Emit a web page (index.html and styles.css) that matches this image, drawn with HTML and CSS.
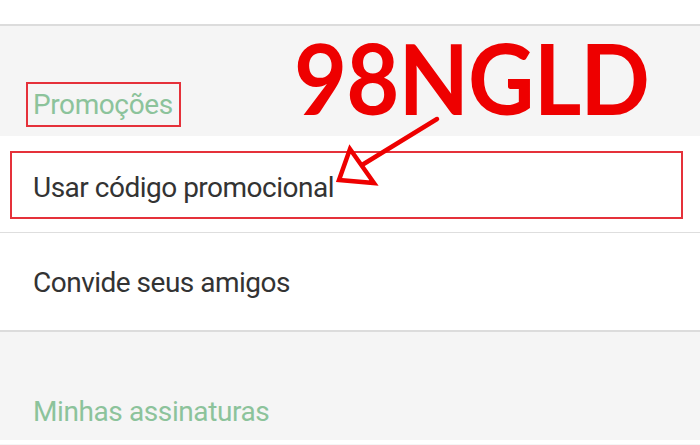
FILE: index.html
```html
<!DOCTYPE html>
<html lang="pt">
<head>
<meta charset="utf-8">
<link rel="stylesheet" href="styles.css">
</head>
<body>
<div class="page">
  <div class="topbar"></div>
  <section class="group-head">
    <span class="label boxed">Promoções</span>
  </section>
  <div class="row row-first">
    <div class="highlight">Usar código promocional</div>
  </div>
  <div class="row row-second">
    <div class="row-text">Convide seus amigos</div>
  </div>
  <section class="group-head group-head-2">
    <span class="label">Minhas assinaturas</span>
  </section>
  <div class="bottom"></div>

  <div class="code">98NGLD</div>
  <svg class="arrow" width="700" height="445" viewBox="0 0 700 445">
    <line x1="437" y1="119" x2="362" y2="165" stroke="#ee0000" stroke-width="4.5" stroke-linecap="round"/>
    <polygon points="350,149 339,180 374,183" fill="none" stroke="#ee0000" stroke-width="4.5" stroke-linejoin="miter"/>
  </svg>
</div>
</body>
</html>
```
FILE: styles.css
```css
html, body {
  margin: 0;
  padding: 0;
  background: #ffffff;
}
.page {
  position: relative;
  width: 700px;
  height: 445px;
  overflow: hidden;
  font-family: Roboto, "Noto Sans", sans-serif;
  background: #f5f5f5;
}
.topbar {
  height: 24px;
  background: #ffffff;
  border-bottom: 2px solid #dcdcdc;
}
.group-head {
  height: 110px;
  display: flex;
  align-items: flex-end;
  padding-left: 26px;
  box-sizing: border-box;
  padding-bottom: 9px;
}
.label {
  font-size: 28px;
  letter-spacing: -0.4px;
  color: #8cc39b;
  line-height: 41px;
  padding: 0 6px 0 5px;
  border: 2px solid transparent;
}
.boxed {
  border-color: #e5313a;
}
.row {
  background: #ffffff;
  height: 97px;
  box-sizing: border-box;
}
.row-first {
  padding: 15px 17px 0 10px;
  border-bottom: 1px solid #dedede;
}
.highlight {
  height: 68px;
  box-sizing: border-box;
  border: 2px solid #e5313a;
  display: flex;
  align-items: center;
  padding-left: 21px;
  font-size: 28px;
  letter-spacing: -0.5px;
  color: #333333;
  padding-top: 4px;
}
.row-second {
  height: 99px;
  border-bottom: 2px solid #dcdcdc;
  display: flex;
  align-items: center;
  padding-left: 33px;
  padding-top: 2px;
}
.row-text {
  font-size: 28px;
  letter-spacing: -0.5px;
  color: #333333;
}
.group-head-2 {
  height: 108px;
  padding-left: 28px;
  padding-bottom: 8px;
}
.group-head-2 .label {
  border: 0;
}
.bottom {
  height: 4px;
  background: #ffffff;
}
.code {
  position: absolute;
  left: 294px;
  top: 22px;
  font-family: Lato, sans-serif;
  font-weight: 700;
  font-size: 98px;
  line-height: 110px;
  color: #ee0000;
  letter-spacing: -1px;
  transform: scaleX(0.935);
  transform-origin: left top;
}
.arrow {
  position: absolute;
  left: 0;
  top: 0;
  pointer-events: none;
}
```
